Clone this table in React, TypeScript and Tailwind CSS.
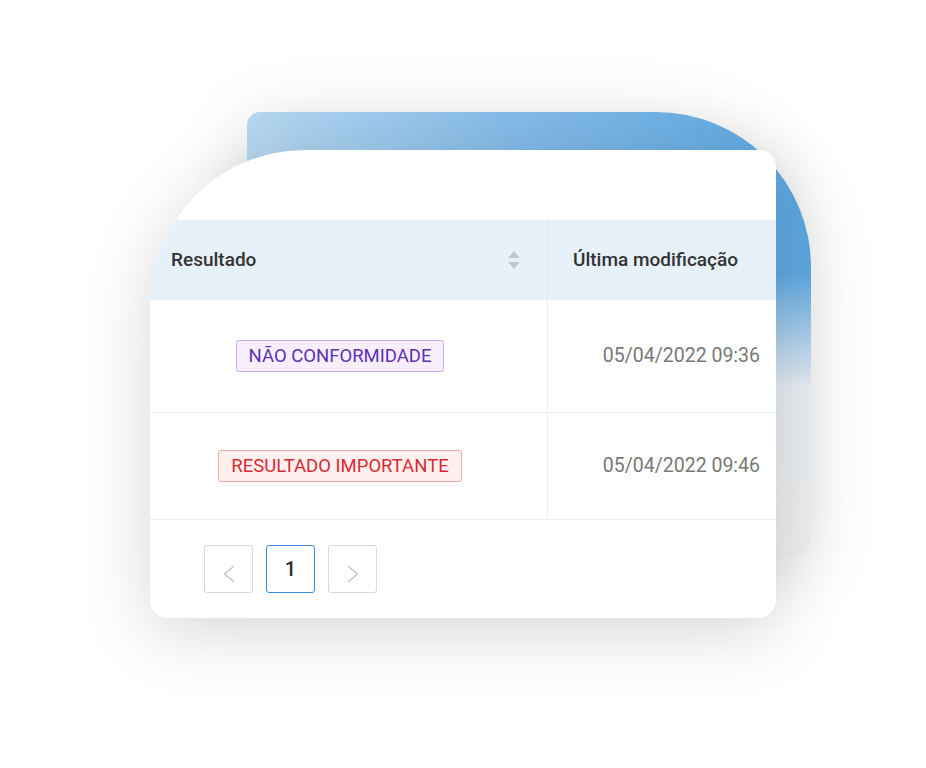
const rows = [
  {
    label: 'NÃO CONFORMIDADE',
    tag: 'bg-[#f7effe] border-[#cfaaf3] text-[#5d31b2]',
    date: '05/04/2022 09:36',
    height: 'h-[113px]',
  },
  {
    label: 'RESULTADO IMPORTANTE',
    tag: 'bg-[#fff0f0] border-[#f6a5a6] text-[#d92a33]',
    date: '05/04/2022 09:46',
    height: 'h-[107px]',
  },
];

function SortIcon() {
  return (
    <svg width="14" height="22" viewBox="0 0 14 22" className="text-[#c3c7cc]">
      <path d="M7 2 L13 9 L1 9 Z" fill="currentColor" />
      <path d="M1 13 L13 13 L7 20 Z" fill="currentColor" />
    </svg>
  );
}

function Chevron({ dir }: { dir: 'left' | 'right' }) {
  return (
    <svg width="12" height="18" viewBox="0 0 12 18" className="mt-[9px]">
      <polyline
        points={dir === 'left' ? '10.5,1.5 1.5,9 10.5,16.5' : '1.5,1.5 10.5,9 1.5,16.5'}
        fill="none"
        stroke="currentColor"
        strokeWidth="1.6"
        strokeLinecap="round"
        strokeLinejoin="round"
      />
    </svg>
  );
}

export default function App() {
  return (
    <div className="min-h-screen w-full bg-white pl-[150px] pt-[150px] font-['Roboto',sans-serif]">
      <div className="relative w-[626px]">
        {/* Back card */}
        <div className="absolute left-[97px] top-[-38px] h-[445px] w-[564px] rounded-tl-[13px] rounded-tr-[155px] rounded-br-[20px] bg-[linear-gradient(180deg,rgba(236,238,240,0)_36%,#e8edf2_62%,#eeeeee_100%),linear-gradient(90deg,#b6d7f0_0%,#86bce8_45%,#5ba6e0_100%)] shadow-[0_10px_70px_rgba(0,0,0,0.13)]" />

        {/* Front card */}
        <div className="relative h-[468px] w-[626px] overflow-hidden rounded-tl-[155px] rounded-tr-[16px] rounded-b-[18px] bg-white shadow-[0_14px_70px_rgba(0,0,0,0.16)]">
          <div className="h-[70px]" />

          {/* Header */}
          <div className="flex h-[80px] bg-[#e7f1f9] text-[19px] font-medium text-[#333333]">
            <div className="flex w-[397px] items-center justify-between pl-[21px] pr-[26px]">
              <span>Resultado</span>
              <SortIcon />
            </div>
            <div className="flex flex-1 items-center border-l border-[#dde7ef] pl-[25px]">
              <span className="whitespace-nowrap">Última modificação</span>
            </div>
          </div>

          {/* Rows */}
          {rows.map((row) => (
            <div key={row.label} className={`flex border-b border-[#eeeeee] ${row.height}`}>
              <div className="flex w-[397px] items-center justify-center pr-[17px]">
                <span className={`whitespace-nowrap rounded-[3px] border px-[12px] py-[4px] text-[18.5px] leading-[22px] ${row.tag}`}>
                  {row.label}
                </span>
              </div>
              <div className="flex flex-1 items-center justify-end border-l border-[#eeeeee] pr-[16px] text-[19.5px] text-[#787878]">
                <span className="whitespace-nowrap">{row.date}</span>
              </div>
            </div>
          ))}

          {/* Pagination */}
          <div className="flex gap-[13px] pl-[54px] pt-[25px]">
            <button className="flex h-[48px] w-[49px] items-center justify-center rounded-[3px] border border-[#d9d9d9] text-[#c4c4c4]">
              <Chevron dir="left" />
            </button>
            <button className="flex h-[48px] w-[49px] items-center justify-center rounded-[3px] border border-[#3a8ee2] text-[20px] font-medium text-[#2d2d2d]">
              1
            </button>
            <button className="flex h-[48px] w-[49px] items-center justify-center rounded-[3px] border border-[#d9d9d9] text-[#c4c4c4]">
              <Chevron dir="right" />
            </button>
          </div>
        </div>
      </div>
    </div>
  );
}
